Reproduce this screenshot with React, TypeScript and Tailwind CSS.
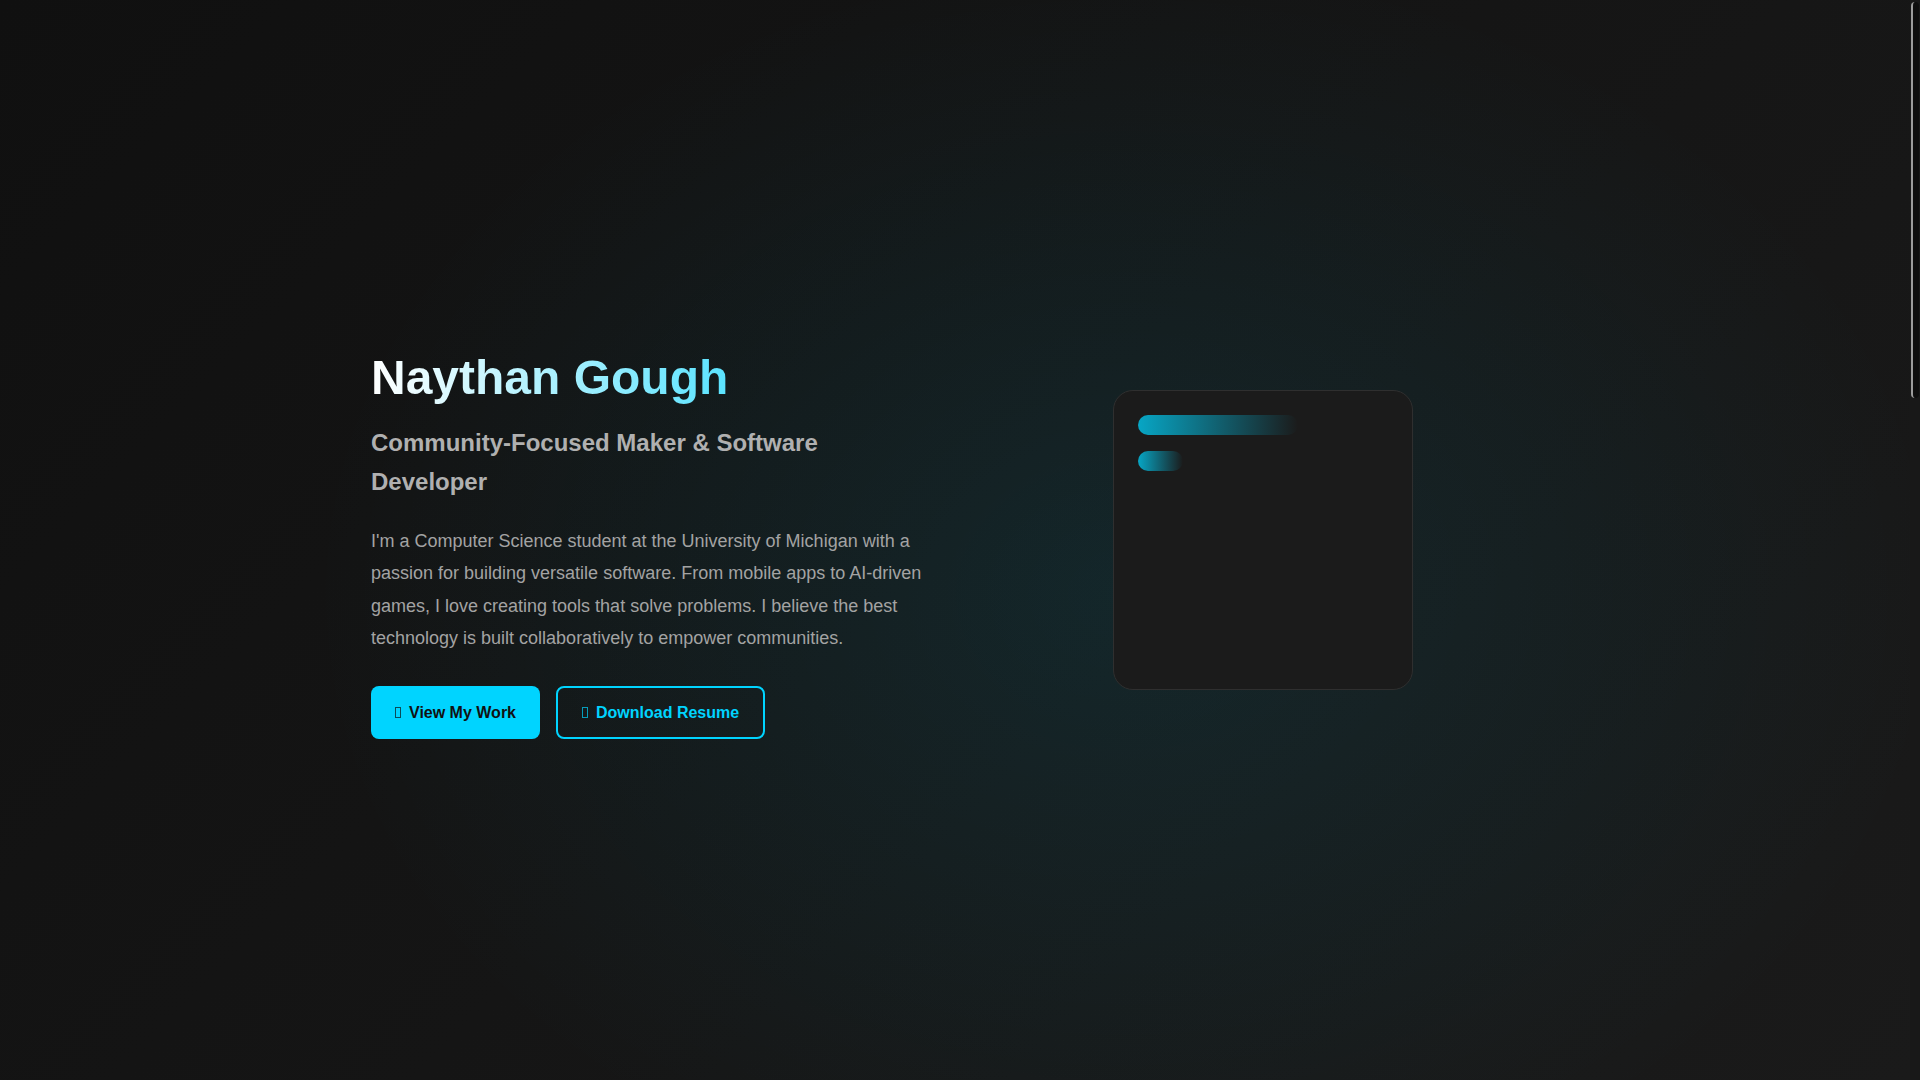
import React from "react";

type ButtonProps = {
  label: string;
  filled?: boolean;
};

function IconBox() {
  return <span className="inline-block w-[6px] h-[11px] border border-current opacity-70 mr-2" />;
}

function HeroButton({ label, filled }: ButtonProps) {
  return (
    <a
      href="#"
      className={
        filled
          ? "flex items-center h-[53px] px-6 rounded-lg bg-[#00d4ff] text-[#111111] text-base font-bold"
          : "flex items-center h-[53px] px-6 rounded-lg border-2 border-[#00d4ff] text-[#00d4ff] text-base font-bold"
      }
    >
      <IconBox />
      {label}
    </a>
  );
}

function CodeCard() {
  return (
    <div className="justify-self-center -translate-y-1 w-[300px] h-[300px] rounded-[20px] border border-[#2f2f2f] bg-[#1b1b1b] p-6">
      <div className="h-5 w-[64%] rounded-full bg-linear-to-r from-[#07a6c5] to-transparent mb-4" />
      <div className="h-5 w-[18%] rounded-full bg-linear-to-r from-[#07a6c5] to-transparent" />
    </div>
  );
}

function ScrollStrip() {
  return (
    <div className="w-[10px] h-screen bg-[#181818] pt-[2px]">
      <div className="ml-[1px] w-[8px] h-[396px] rounded-full border-l-2 border-[#9c9c9c] bg-[#0e0e0e]" />
    </div>
  );
}

export default function App() {
  return (
    <div className="flex h-screen overflow-hidden font-['Liberation_Sans',Arial,sans-serif] bg-[#131313]">
      <main className="flex-1 h-screen bg-[radial-gradient(ellipse_820px_640px_at_59%_55%,rgba(0,212,255,0.09),transparent_100%),linear-gradient(135deg,#101010,#1a1a1a)]">
        <section className="h-screen flex items-center pt-2">
          <div className="w-full max-w-[1200px] mx-auto px-4 grid grid-cols-2 gap-16 items-center">
            <div>
              <h1 className="text-5xl leading-[1.2] font-bold bg-linear-to-r/srgb from-white to-[#00d4ff] bg-clip-text text-transparent mb-[18px]">
                Naythan Gough
              </h1>
              <h2 className="text-2xl leading-[1.6] font-bold text-[#b0b0b0] mb-6 max-w-[460px]">
                Community-Focused Maker &amp; Software Developer
              </h2>
              <p className="text-lg leading-[1.8] text-[#a3a3a3] mb-8">
                I'm a Computer Science student at the University of Michigan with a passion for building
                versatile software. From mobile apps to AI-driven games, I love creating tools that solve
                problems. I believe the best technology is built collaboratively to empower communities.
              </p>
              <div className="flex gap-4">
                <HeroButton label="View My Work" filled />
                <HeroButton label="Download Resume" />
              </div>
            </div>
            <CodeCard />
          </div>
        </section>
      </main>
      <ScrollStrip />
    </div>
  );
}
